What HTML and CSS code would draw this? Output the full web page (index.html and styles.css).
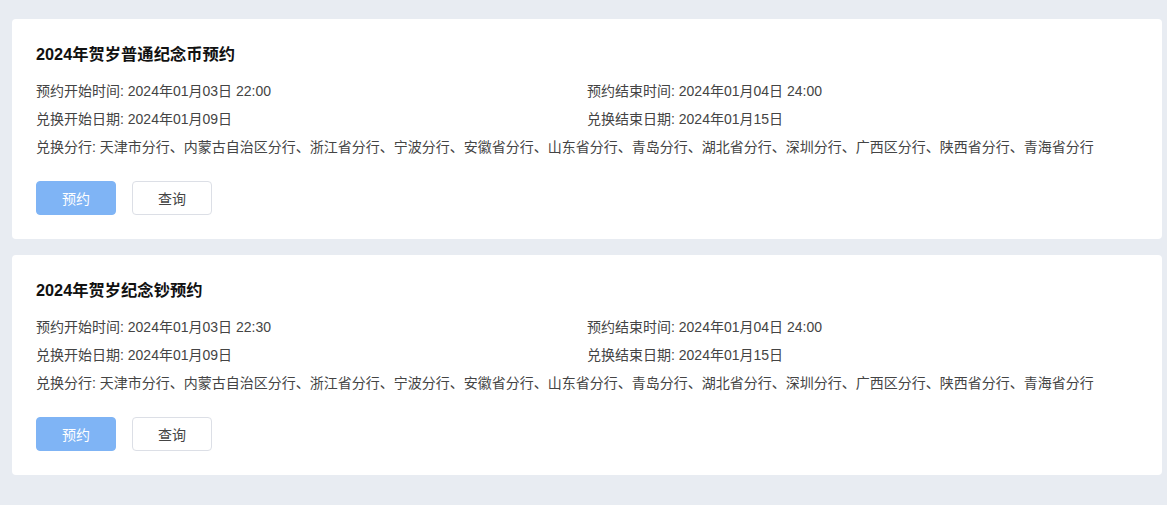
FILE: index.html
```html
<!DOCTYPE html>
<html lang="zh">
<head>
<meta charset="utf-8">
<link rel="stylesheet" href="styles.css">
</head>
<body>
<div class="page">
  <div class="card">
    <h2 class="title">2024年贺岁普通纪念币预约</h2>
    <div class="info">
      <div class="row">预约开始时间: 2024年01月03日 22:00</div>
      <div class="row">预约结束时间: 2024年01月04日 24:00</div>
      <div class="row">兑换开始日期: 2024年01月09日</div>
      <div class="row">兑换结束日期: 2024年01月15日</div>
      <div class="row full">兑换分行: 天津市分行、内蒙古自治区分行、浙江省分行、宁波分行、安徽省分行、山东省分行、青岛分行、湖北省分行、深圳分行、广西区分行、陕西省分行、青海省分行</div>
    </div>
    <div class="actions">
      <button class="btn primary">预约</button>
      <button class="btn plain">查询</button>
    </div>
  </div>
  <div class="card">
    <h2 class="title">2024年贺岁纪念钞预约</h2>
    <div class="info">
      <div class="row">预约开始时间: 2024年01月03日 22:30</div>
      <div class="row">预约结束时间: 2024年01月04日 24:00</div>
      <div class="row">兑换开始日期: 2024年01月09日</div>
      <div class="row">兑换结束日期: 2024年01月15日</div>
      <div class="row full">兑换分行: 天津市分行、内蒙古自治区分行、浙江省分行、宁波分行、安徽省分行、山东省分行、青岛分行、湖北省分行、深圳分行、广西区分行、陕西省分行、青海省分行</div>
    </div>
    <div class="actions">
      <button class="btn primary">预约</button>
      <button class="btn plain">查询</button>
    </div>
  </div>
</div>
</body>
</html>
```
FILE: styles.css
```css
html, body {
  margin: 0;
  padding: 0;
  background: #e8ecf2;
  font-family: "Liberation Sans", Arial, "Noto Sans CJK SC", sans-serif;
}
.page {
  display: flex;
  flex-direction: column;
  gap: 16px;
  padding: 19px 5px 0 12px;
}
.card {
  background: #fff;
  border-radius: 4px;
  padding: 24px 24px 24px 24px;
  height: 220px;
  box-sizing: border-box;
}
.title {
  margin: 0;
  font-size: 16.3px;
  line-height: 22px;
  font-weight: bold;
  color: #111;
}
.info {
  display: grid;
  grid-template-columns: 1fr 1fr;
  margin-top: 12px;
  font-size: 14px;
  line-height: 28px;
  color: #444;
}
.row.full {
  grid-column: 1 / span 2;
  white-space: nowrap;
}
.actions {
  display: flex;
  gap: 16px;
  margin-top: 20px;
}
.btn {
  width: 80px;
  height: 34px;
  border-radius: 4px;
  font-size: 14px;
  font-family: inherit;
  padding: 0;
}
.primary {
  background: #7fb4f5;
  border: 1px solid #7fb4f5;
  color: #fff;
}
.plain {
  background: #fff;
  border: 1px solid #dcdfe6;
  color: #444;
}
```
